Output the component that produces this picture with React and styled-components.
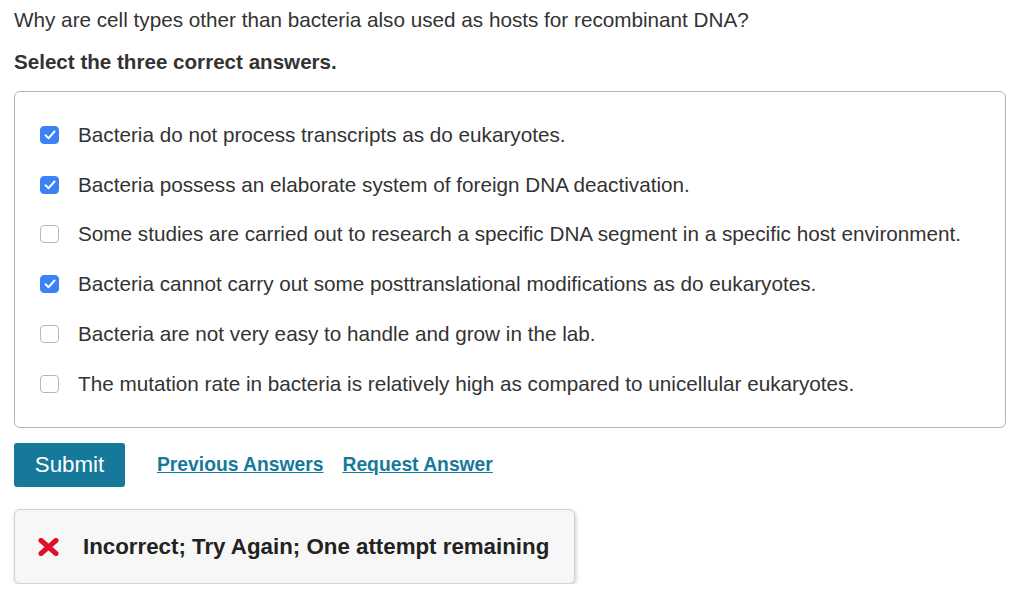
import React from "react";
import styled, { createGlobalStyle } from "styled-components";

const GlobalStyle = createGlobalStyle`
  body {
    margin: 0;
    background: #ffffff;
    font-family: "Liberation Sans", Arial, Helvetica, sans-serif;
    color: #333333;
  }
`;

const Page = styled.div`
  width: 1024px;
  padding: 8px 18px 0 14px;
  box-sizing: border-box;
`;

const Question = styled.p`
  margin: 0;
  font-size: 20.7px;
  line-height: 24px;
`;

const Instruction = styled.p`
  margin: 18px 0 0 0;
  font-size: 20.6px;
  font-weight: bold;
  line-height: 24px;
`;

const OptionBox = styled.div`
  margin-top: 17px;
  border: 1px solid #b3b3b3;
  border-radius: 6px;
  padding: 18px 0 18px 25px;
`;

const Option = styled.label`
  display: flex;
  align-items: center;
  height: 49.8px;
  font-size: 20.7px;
  gap: 19px;
`;

const Box = styled.span`
  width: 19px;
  height: 18px;
  box-sizing: border-box;
  border-radius: 4px;
  display: flex;
  align-items: center;
  justify-content: center;
  flex-shrink: 0;
  background: ${({ $checked }) => ($checked ? "#3a82f6" : "#ffffff")};
  border: 1px solid ${({ $checked }) => ($checked ? "#3a82f6" : "#b8b8b8")};
`;

const Actions = styled.div`
  display: flex;
  align-items: center;
  margin-top: 15px;
`;

const SubmitButton = styled.button`
  width: 111px;
  height: 44px;
  border: none;
  border-radius: 3px;
  background: #16799a;
  color: #ffffff;
  font-family: "Liberation Sans", Arial, sans-serif;
  font-size: 22.3px;
  margin-right: 32px;
`;

const LinkText = styled.a`
  color: #16799a;
  font-weight: bold;
  font-size: 19.3px;
  text-decoration: underline;
  margin-right: 19px;
  cursor: pointer;
`;

const Feedback = styled.div`
  margin-top: 22px;
  width: 561px;
  height: 75px;
  box-sizing: border-box;
  background: #f7f7f7;
  border: 1px solid #d2d2d2;
  border-radius: 6px;
  box-shadow: 1px 2px 4px rgba(0, 0, 0, 0.2);
  display: flex;
  align-items: center;
  padding: 2px 0 0 23px;
  gap: 24px;
`;

const FeedbackText = styled.span`
  font-size: 22.3px;
  font-weight: bold;
  color: #222222;
`;

const options = [
  { text: "Bacteria do not process transcripts as do eukaryotes.", checked: true },
  { text: "Bacteria possess an elaborate system of foreign DNA deactivation.", checked: true },
  { text: "Some studies are carried out to research a specific DNA segment in a specific host environment.", checked: false },
  { text: "Bacteria cannot carry out some posttranslational modifications as do eukaryotes.", checked: true },
  { text: "Bacteria are not very easy to handle and grow in the lab.", checked: false },
  { text: "The mutation rate in bacteria is relatively high as compared to unicellular eukaryotes.", checked: false },
];

const Check = () => (
  <svg width="12" height="10" viewBox="0 0 12 10">
    <path d="M1.5 5.2 L4.6 8.2 L10.5 1.5" fill="none" stroke="#fff" strokeWidth="2" strokeLinecap="round" strokeLinejoin="round" />
  </svg>
);

const Cross = () => (
  <svg width="21" height="18" viewBox="0 0 21 18">
    <path d="M3 2.5 L18 15.5 M18 2.5 L3 15.5" stroke="#e0102a" strokeWidth="5" strokeLinecap="round" />
  </svg>
);

export default function App() {
  return (
    <>
      <GlobalStyle />
      <Page>
        <Question>Why are cell types other than bacteria also used as hosts for recombinant DNA?</Question>
        <Instruction>Select the three correct answers.</Instruction>
        <OptionBox>
          {options.map((o, i) => (
            <Option key={i}>
              <Box $checked={o.checked}>{o.checked && <Check />}</Box>
              <span>{o.text}</span>
            </Option>
          ))}
        </OptionBox>
        <Actions>
          <SubmitButton>Submit</SubmitButton>
          <LinkText>Previous Answers</LinkText>
          <LinkText>Request Answer</LinkText>
        </Actions>
        <Feedback>
          <Cross />
          <FeedbackText>Incorrect; Try Again; One attempt remaining</FeedbackText>
        </Feedback>
      </Page>
    </>
  );
}
